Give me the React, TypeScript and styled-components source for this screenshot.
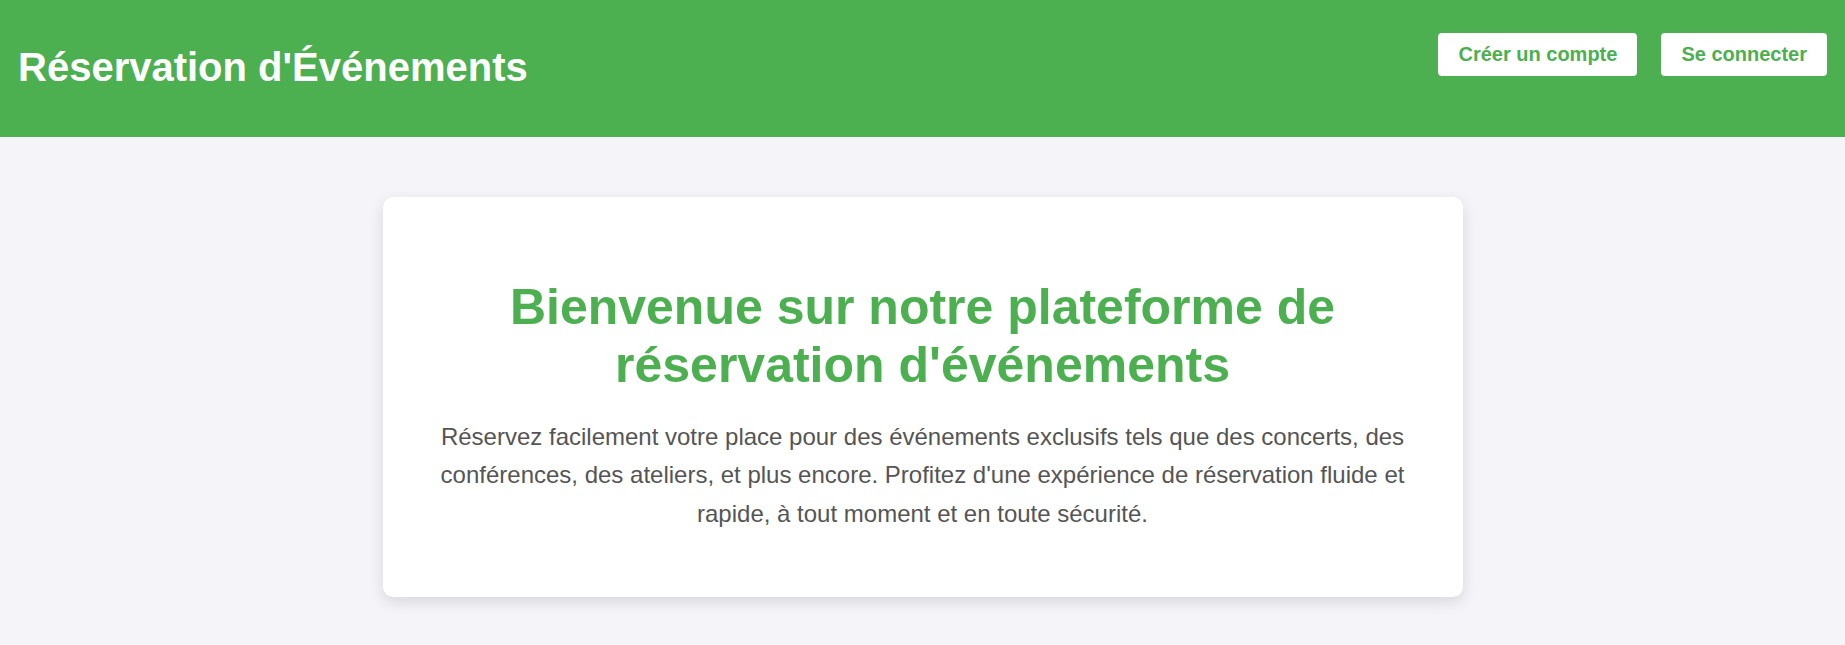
import React from "react";
import styled, { createGlobalStyle } from "styled-components";

const GlobalStyle = createGlobalStyle`
  body {
    margin: 0;
    background: #f4f4f9;
    font-family: Arial, "Liberation Sans", sans-serif;
    color: #333;
  }
`;

const Header = styled.header`
  display: flex;
  justify-content: space-between;
  align-items: flex-start;
  padding: 20px 18px 23px;
  background: #4caf50;
  color: white;
`;

const SiteTitle = styled.h1`
  margin: 24px 0;
  font-size: 40px;
  line-height: 46px;
`;

const Actions = styled.nav`
  display: flex;
  gap: 24px;
  padding-top: 13px;
`;

const ActionLink = styled.a`
  padding: 10px 20px;
  border-radius: 4px;
  background: white;
  color: #4caf50;
  font-size: 20px;
  line-height: 23px;
  font-weight: bold;
  text-decoration: none;
`;

const Hero = styled.main`
  box-sizing: border-box;
  max-width: 1080px;
  margin: 60px auto;
  padding: 40px 48px;
  border-radius: 10px;
  background: white;
  box-shadow: 0 5px 15px rgba(0, 0, 0, 0.12);
  text-align: center;
`;

const HeroTitle = styled.h2`
  margin: 41px 0 24px;
  color: #4caf50;
  font-size: 50px;
  line-height: 58px;
`;

const HeroText = styled.p`
  margin: 24px 0;
  color: #555;
  font-size: 24px;
  line-height: 1.6;
`;

export default function App() {
  return (
    <>
      <GlobalStyle />
      <Header>
        <SiteTitle>Réservation d'Événements</SiteTitle>
        <Actions>
          <ActionLink href="#inscription">Créer un compte</ActionLink>
          <ActionLink href="#connexion">Se connecter</ActionLink>
        </Actions>
      </Header>
      <Hero>
        <HeroTitle>Bienvenue sur notre plateforme de réservation d'événements</HeroTitle>
        <HeroText>
          Réservez facilement votre place pour des événements exclusifs tels que des concerts, des
          conférences, des ateliers, et plus encore. Profitez d'une expérience de réservation fluide
          et rapide, à tout moment et en toute sécurité.
        </HeroText>
      </Hero>
    </>
  );
}
